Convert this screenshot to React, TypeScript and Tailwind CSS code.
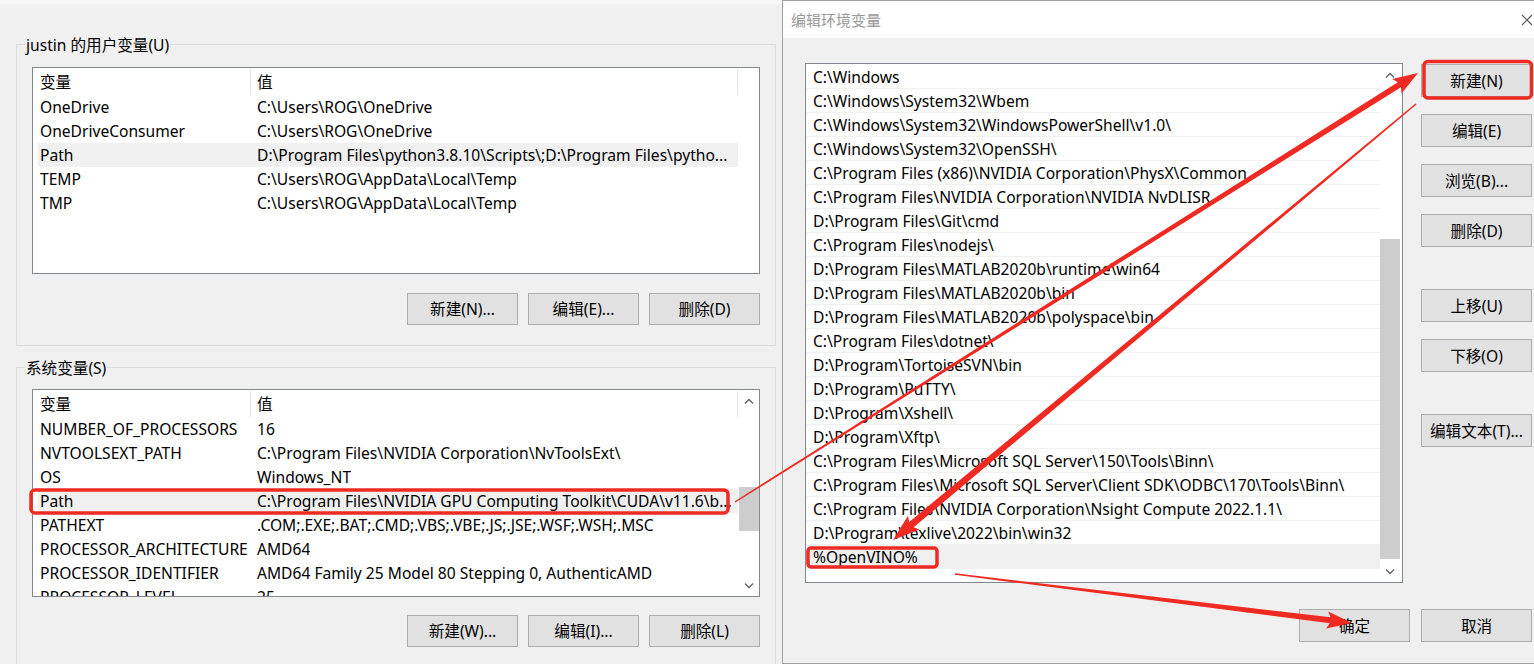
import React from "react";

type Row = { name: string; value: string; selected?: boolean };

const userVars: Row[] = [
  { name: "OneDrive", value: "C:\\Users\\ROG\\OneDrive" },
  { name: "OneDriveConsumer", value: "C:\\Users\\ROG\\OneDrive" },
  { name: "Path", value: "D:\\Program Files\\python3.8.10\\Scripts\\;D:\\Program Files\\pytho...", selected: true },
  { name: "TEMP", value: "C:\\Users\\ROG\\AppData\\Local\\Temp" },
  { name: "TMP", value: "C:\\Users\\ROG\\AppData\\Local\\Temp" },
];

const sysVars: Row[] = [
  { name: "NUMBER_OF_PROCESSORS", value: "16" },
  { name: "NVTOOLSEXT_PATH", value: "C:\\Program Files\\NVIDIA Corporation\\NvToolsExt\\" },
  { name: "OS", value: "Windows_NT" },
  { name: "Path", value: "C:\\Program Files\\NVIDIA GPU Computing Toolkit\\CUDA\\v11.6\\b...", selected: true },
  { name: "PATHEXT", value: ".COM;.EXE;.BAT;.CMD;.VBS;.VBE;.JS;.JSE;.WSF;.WSH;.MSC" },
  { name: "PROCESSOR_ARCHITECTURE", value: "AMD64" },
  { name: "PROCESSOR_IDENTIFIER", value: "AMD64 Family 25 Model 80 Stepping 0, AuthenticAMD" },
  { name: "PROCESSOR_LEVEL", value: "25" },
];

const pathItems = [
  "C:\\Windows",
  "C:\\Windows\\System32\\Wbem",
  "C:\\Windows\\System32\\WindowsPowerShell\\v1.0\\",
  "C:\\Windows\\System32\\OpenSSH\\",
  "C:\\Program Files (x86)\\NVIDIA Corporation\\PhysX\\Common",
  "C:\\Program Files\\NVIDIA Corporation\\NVIDIA NvDLISR",
  "D:\\Program Files\\Git\\cmd",
  "C:\\Program Files\\nodejs\\",
  "D:\\Program Files\\MATLAB2020b\\runtime\\win64",
  "D:\\Program Files\\MATLAB2020b\\bin",
  "D:\\Program Files\\MATLAB2020b\\polyspace\\bin",
  "C:\\Program Files\\dotnet\\",
  "D:\\Program\\TortoiseSVN\\bin",
  "D:\\Program\\PuTTY\\",
  "D:\\Program\\Xshell\\",
  "D:\\Program\\Xftp\\",
  "C:\\Program Files\\Microsoft SQL Server\\150\\Tools\\Binn\\",
  "C:\\Program Files\\Microsoft SQL Server\\Client SDK\\ODBC\\170\\Tools\\Binn\\",
  "C:\\Program Files\\NVIDIA Corporation\\Nsight Compute 2022.1.1\\",
  "D:\\Program\\texlive\\2022\\bin\\win32",
  "%OpenVINO%",
  "",
];

function Chevron({ down }: { down?: boolean }) {
  return (
    <svg width="10" height="6" viewBox="0 0 10 6" className={down ? "rotate-180" : ""}>
      <polyline points="1,5.5 5,1.5 9,5.5" fill="none" stroke="#606060" strokeWidth="1.3" />
    </svg>
  );
}

function WinButton({ label, className = "" }: { label: string; className?: string }) {
  return (
    <div className={`flex w-[111px] shrink-0 items-center justify-center border border-[#adadad] bg-[#e1e1e1] text-black ${className}`}>
      {label}
    </div>
  );
}

function VarList({ rows, scroll }: { rows: Row[]; scroll?: boolean }) {
  return (
    <div className={`flex w-[728px] overflow-hidden border border-[#828790] bg-white ${scroll ? "h-[208px]" : "h-[207px]"}`}>
      <div className="w-[706px] shrink-0">
        {/* header */}
        <div className="flex h-[27px] w-[705px] items-center">
          <div className="flex h-[26px] w-[218px] items-center border-r border-[#e5e5e5] pl-[7px]">变量</div>
          <div className="flex h-[26px] flex-1 items-center border-r border-[#e5e5e5] pl-[6px]">值</div>
        </div>
        {rows.map((r) => (
          <div
            key={r.name}
            className={`ml-[5px] flex h-[24px] w-[700px] items-center whitespace-nowrap ${r.selected ? "bg-[#f0f0f0]" : ""}`}
          >
            <div className="w-[212px] shrink-0 pl-[2px]">{r.name}</div>
            <div className="overflow-hidden pl-[7px]">{r.value}</div>
          </div>
        ))}
      </div>
      {scroll && (
        <div className="flex w-[20px] shrink-0 flex-col">
          <div className="flex h-[21px] items-center justify-center">
            <Chevron />
          </div>
          <div className="h-[76px]" />
          <div className="h-[44px] bg-[#cdcdcd]" />
          <div className="flex-1" />
          <div className="flex h-[21px] items-center justify-center">
            <Chevron down />
          </div>
        </div>
      )}
    </div>
  );
}

function arrowPoints(
  x0: number, y0: number, x1: number, y1: number,
  w0: number, w1: number, headLen: number, headW: number
) {
  const dx = x1 - x0;
  const dy = y1 - y0;
  const len = Math.hypot(dx, dy);
  const ux = dx / len;
  const uy = dy / len;
  const nx = -uy;
  const ny = ux;
  const bx = x1 - ux * headLen;
  const by = y1 - uy * headLen;
  const pts = [
    [x0 + (nx * w0) / 2, y0 + (ny * w0) / 2],
    [bx + (nx * w1) / 2, by + (ny * w1) / 2],
    [bx - ux * 3 + (nx * headW) / 2, by - uy * 3 + (ny * headW) / 2],
    [x1, y1],
    [bx - ux * 3 - (nx * headW) / 2, by - uy * 3 - (ny * headW) / 2],
    [bx - (nx * w1) / 2, by - (ny * w1) / 2],
    [x0 - (nx * w0) / 2, y0 - (ny * w0) / 2],
  ];
  return pts.map((p) => `${p[0].toFixed(1)},${p[1].toFixed(1)}`).join(" ");
}

function Annotations() {
  const red = "#ee2a22";
  return (
    <svg className="pointer-events-none absolute left-0 top-0" width="1534" height="664" viewBox="0 0 1534 664">
      <rect x="31" y="490" width="697" height="23" rx="4" fill="none" stroke={red} strokeWidth="3.5" />
      <rect x="808" y="548" width="129" height="19" rx="3" fill="none" stroke={red} strokeWidth="3.5" />
      <rect x="1424" y="61.5" width="107.5" height="36.5" rx="4" fill="none" stroke={red} strokeWidth="3.5" />
      <polygon fill={red} points={arrowPoints(735, 502, 1418, 73, 1.5, 6, 22, 17)} />
      <polygon fill={red} points={arrowPoints(1416, 104, 893, 540, 1.5, 7, 24, 18)} />
      <polygon fill={red} points={arrowPoints(955, 574, 1352, 623, 1.5, 6, 22, 17)} />
    </svg>
  );
}

export default function App() {
  return (
    <div className="relative flex h-[664px] w-[1534px] overflow-hidden bg-[#f0f0f0] font-['Noto_Sans','Noto_Sans_CJK_SC',sans-serif] text-[15.6px] leading-[20px] text-black">
      {/* background window: environment variables */}
      <div className="flex w-[782px] shrink-0 flex-col">
        <div className="h-[4px] shrink-0 bg-[#f7f7f7]" />
        <div className="ml-[16px] mt-[40px] h-[302px] w-[760px] shrink-0 border border-[#dcdcdc]">
          <div className="-mt-[10px] ml-[8px] w-fit bg-[#f0f0f0] px-[1px]">justin 的用户变量(U)</div>
          <div className="ml-[15px] mt-[12px]">
            <VarList rows={userVars} />
          </div>
          <div className="ml-[15px] mt-[19px] flex w-[728px] justify-end gap-[10px]">
            <WinButton label="新建(N)..." className="h-[32px]" />
            <WinButton label="编辑(E)..." className="h-[32px]" />
            <WinButton label="删除(D)" className="h-[32px]" />
          </div>
        </div>
        <div className="ml-[16px] mt-[21px] h-[320px] w-[760px] shrink-0 border border-[#dcdcdc]">
          <div className="-mt-[10px] ml-[8px] w-fit bg-[#f0f0f0] px-[1px]">系统变量(S)</div>
          <div className="ml-[15px] mt-[11px]">
            <VarList rows={sysVars} scroll />
          </div>
          <div className="ml-[15px] mt-[18px] flex w-[728px] justify-end gap-[10px]">
            <WinButton label="新建(W)..." className="h-[32px]" />
            <WinButton label="编辑(I)..." className="h-[32px]" />
            <WinButton label="删除(L)" className="h-[32px]" />
          </div>
        </div>
      </div>

      {/* foreground dialog: edit environment variable */}
      <div className="flex h-[664px] w-[760px] shrink-0 flex-col border-y border-l border-[#a0a0a0] bg-[#f0f0f0]">
        <div className="flex h-[37px] shrink-0 items-center bg-white pl-[8px] pr-[8px] text-[15px] text-[#999999]">
          <span>编辑环境变量</span>
          <svg width="12" height="12" viewBox="0 0 12 12" className="ml-[640px] shrink-0">
            <path d="M1 1 L11 11 M11 1 L1 11" stroke="#555" strokeWidth="1.1" fill="none" />
          </svg>
        </div>
        <div className="flex shrink-0 pl-[22px] pt-[25px]">
          <div className="flex h-[520px] w-[598px] shrink-0 border border-[#828790] bg-white">
            <div className="w-[574px] shrink-0 overflow-hidden pt-[1px]">
              {pathItems.map((p, i) => (
                <div
                  key={i}
                  className={`flex h-[24px] items-center whitespace-nowrap border-b border-[#f0f0f0] pl-[7px] ${p === "%OpenVINO%" ? "bg-[#f0f0f0]" : ""}`}
                >
                  {p}
                </div>
              ))}
            </div>
            <div className="flex w-[20px] shrink-0 flex-col">
              <div className="flex h-[21px] items-center justify-center">
                <Chevron />
              </div>
              <div className="h-[154px]" />
              <div className="h-[320px] bg-[#cdcdcd]" />
              <div className="flex-1" />
              <div className="flex h-[21px] items-center justify-center">
                <Chevron down />
              </div>
            </div>
          </div>
          <div className="ml-[18px] flex flex-col pt-[1px]">
            <WinButton label="新建(N)" className="h-[33px]" />
            <WinButton label="编辑(E)" className="mt-[17px] h-[33px]" />
            <WinButton label="浏览(B)..." className="mt-[17px] h-[33px]" />
            <WinButton label="删除(D)" className="mt-[17px] h-[33px]" />
            <WinButton label="上移(U)" className="mt-[42px] h-[33px]" />
            <WinButton label="下移(O)" className="mt-[17px] h-[33px]" />
            <WinButton label="编辑文本(T)..." className="mt-[42px] h-[33px]" />
          </div>
        </div>
        <div className="mt-[26px] flex shrink-0 gap-[11px] pl-[516px]">
          <WinButton label="确定" className="h-[33px]" />
          <WinButton label="取消" className="h-[33px]" />
        </div>
      </div>

      <Annotations />
    </div>
  );
}
